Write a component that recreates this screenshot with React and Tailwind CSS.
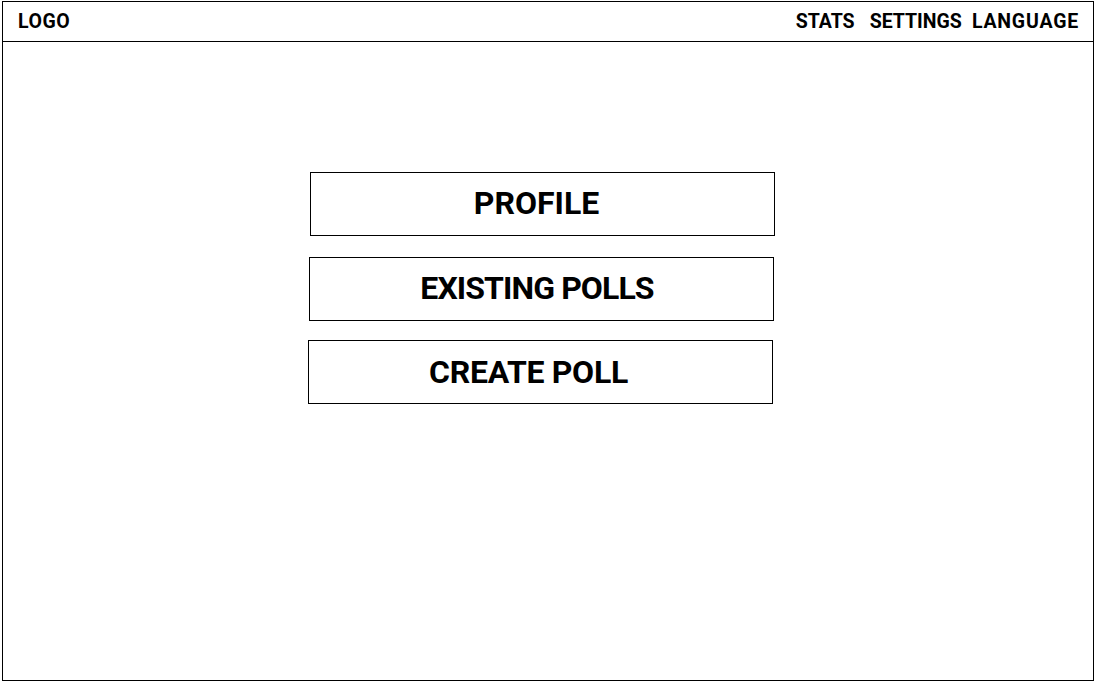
export default function App() {
  const font = { fontFamily: "Roboto, 'Liberation Sans', sans-serif" };
  return (
    <div className="w-[1096px] h-[683px] bg-white" style={font}>
      <div className="ml-[2px] mt-[1px] w-[1092px] h-[680px] border border-black flex flex-col">
        <header className="h-[40px] border-b border-black flex items-center justify-between pl-[15px] pr-[14px] shrink-0">
          <span className="text-[19.5px] font-bold text-black leading-none tracking-[0.5px]">LOGO</span>
          <nav className="flex items-center text-[19.5px] font-bold text-black leading-none">
            <span>STATS</span>
            <span className="ml-[15px]">SETTINGS</span>
            <span className="ml-[10px] tracking-[0.8px]">LANGUAGE</span>
          </nav>
        </header>
        <main className="flex flex-col pt-[130px]">
          <div className="ml-[307px] w-[465px] h-[64px] border border-black flex items-center justify-center pr-[12px] pb-[3px]">
            <span className="text-[32px] font-bold text-black leading-none">PROFILE</span>
          </div>
          <div className="ml-[306px] mt-[21px] w-[465px] h-[64px] border border-black flex items-center justify-center pr-[9px] pb-[3px]">
            <span className="text-[32px] font-bold text-black leading-none tracking-[-0.9px]">EXISTING POLLS</span>
          </div>
          <div className="ml-[305px] mt-[19px] w-[465px] h-[64px] border border-black flex items-center justify-center pr-[24px] pb-[1px]">
            <span className="text-[32px] font-bold text-black leading-none tracking-[-0.3px]">CREATE POLL</span>
          </div>
        </main>
      </div>
    </div>
  );
}
